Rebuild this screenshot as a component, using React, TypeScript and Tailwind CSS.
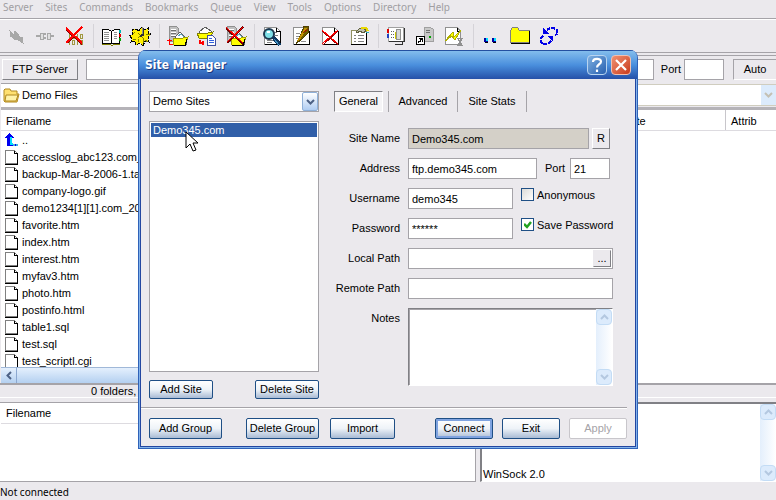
import type { ReactNode } from 'react'

const menus = ['Server', 'Sites', 'Commands', 'Bookmarks', 'Queue', 'View', 'Tools', 'Options', 'Directory', 'Help']

const files = [
  'accesslog_abc123.com_Mar-2006.gz',
  'backup-Mar-8-2006-1.tar.gz',
  'company-logo.gif',
  'demo1234[1][1].com_2006.zip',
  'favorite.htm',
  'index.htm',
  'interest.htm',
  'myfav3.htm',
  'photo.htm',
  'postinfo.html',
  'table1.sql',
  'test.sql',
  'test_scriptl.cgi',
]

function Icon({ children }: { children: ReactNode }) {
  return (
    <svg width="24" height="24" viewBox="0 0 24 24" fill="none" shapeRendering="crispEdges">
      {children}
    </svg>
  )
}

// grey server box with drive slots, used behind several toolbar icons
function Tower() {
  return (
    <>
      <path d="M4.500 2.500h7l2 2v13h-9z" fill="#c0c0c0" stroke="#909090" />
      <path d="M6 5h5M6 8h5M6 11h5" stroke="#fff" />
      <path d="M6 6h5M6 9h5M6 12h5" stroke="#707070" />
      <path d="M10 13h2" stroke="#00c000" strokeWidth="2" />
    </>
  )
}

function OpenFolder() {
  return (
    <>
      <path d="M10 13l5-5 6 6v6H10z" fill="#fff" stroke="#606060" />
      <path d="M13 12l3-2 3 3" stroke="#5aa0c0" />
      <path d="M8 14h10l5-1-3 8H9z" fill="#ffff00" stroke="#a0a000" />
      <path d="M9 21.500h11l2-6" stroke="#000" />
    </>
  )
}

function Page() {
  return (
    <>
      <path d="M4.500 3.500h12l4 4v13h-16z" fill="#fff" stroke="#909090" />
      <path d="M16.500 3.500v4h4v13h-16" stroke="#000" />
    </>
  )
}

const groups: { name: string; art: ReactNode }[][] = [
  [
    {
      name: 'Connect',
      art: (
        <path d="M6 7l4 4 1-4 6 7 1-1 1 6-6-4-2 1-3-4-1 1z" fill="#a8a8a8" stroke="#a8a8a8" />
      ),
    },
    {
      name: 'Disconnect',
      art: (
        <>
          <path d="M3 12h4M17 12h4M11 10h2M11 14h2" stroke="#a8a8a8" strokeWidth="2" />
          <path d="M7 9h3v6H7zM14 9h3v6h-3z" stroke="#a8a8a8" fill="#e0e0e0" />
        </>
      ),
    },
    {
      name: 'Abort',
      art: (
        <>
          <path d="M7.500 10v5M10.500 10.500h2v4h-2zM15.500 10v5M18.500 10.500h2v4h-2zM7.500 16v5M10.500 16.500h2v4h-2zM15.500 16v5M18.500 16.500h2v4h-2z" stroke="#a09840" />
          <path d="M4 5l16 15M20 3L5 19" stroke="#800000" strokeWidth="2" />
          <path d="M4 4l16 15M20 3L4 19" stroke="#ff0000" strokeWidth="2" />
        </>
      ),
    },
  ],
  [
    {
      name: 'Site Manager',
      art: (
        <>
          <path d="M3.500 5.500h6l3 2 3-2h5v14h-17z" fill="#fff" stroke="#000" />
          <path d="M12.500 7v13" stroke="#000" />
          <path d="M5 8.500h5M5 10.500h5M5 12.500h5M5 14.500h5M5 16.500h5M15 8.500h3M15 10.500h3M15 12.500h3M15 14.500h3" stroke="#909090" />
          <path d="M21 6v3" stroke="#00b0b0" strokeWidth="2" />
          <path d="M21 10v3" stroke="#e00000" strokeWidth="2" />
          <path d="M21 14v3" stroke="#00a000" strokeWidth="2" />
          <path d="M3 20.500h8l2 1 2-1h6" stroke="#808000" />
        </>
      ),
    },
    {
      name: 'Options',
      art: (
        <>
          <path d="M8 5l3 2 2-4 3 3 4-2v5l3 1-3 4 1 4-4-1-2 5-3-3-4 2-1-4-4 1 1-4-3-2 4-2-1-4z" fill="#ffee00" stroke="#000" strokeDasharray="3 1" />
          <path d="M7 8l-2 2M17 16l3 2M5 15h3M18 10h4M10 18v-3M15 19v-4" stroke="#808000" />
          <path d="M10 9l6 6M10 14l3-3" stroke="#808000" />
          <path d="M15 4v7l-3 1" stroke="#303030" strokeWidth="2" />
          <path d="M14 3v7" stroke="#909090" />
        </>
      ),
    },
  ],
  [
    {
      name: 'Upload',
      art: (
        <>
          <Tower />
          <OpenFolder />
          <path d="M2 16.500h5M4.500 15v5.500H8" stroke="#ff0000" />
        </>
      ),
    },
    {
      name: 'Download',
      art: (
        <>
          <path d="M5 8l6-5 6 4v6H5z" fill="#fff" stroke="#606060" />
          <path d="M3 9h11l5-1-3 6H5z" fill="#ffff00" stroke="#808000" />
          <path d="M13.500 11.500h5l3 3v7h-8z" fill="#fff" stroke="#4050a0" />
          <path d="M15 14.500h3M15 16.500h5M15 18.500h5" stroke="#3060e0" />
          <path d="M6 16v3h4M9 17v4" stroke="#ff0000" strokeWidth="2" />
        </>
      ),
    },
    {
      name: 'Delete Queue',
      art: (
        <>
          <Tower />
          <OpenFolder />
          <path d="M3 4l17 16M20 3L4 19" stroke="#700000" strokeWidth="2" />
          <path d="M3 3l17 16M20 3L4 18" stroke="#ff0000" />
        </>
      ),
    },
  ],
  [
    {
      name: 'View',
      art: (
        <>
          <Page />
          <path d="M7 16h7M7 18h5M14 8h3M15 11h3" stroke="#808080" />
          <circle cx="9" cy="10" r="5" fill="#7ee0e8" stroke="#1c3850" strokeWidth="2" shapeRendering="auto" />
          <path d="M7 8h3" stroke="#fff" strokeWidth="2" />
          <path d="M13 13l7 8" stroke="#103860" strokeWidth="4" />
          <path d="M14 15l5 6" stroke="#4090c0" />
        </>
      ),
    },
    {
      name: 'Edit',
      art: (
        <>
          <Page />
          <path d="M7 9h4M7 12h4M12 17h5M7 14h3" stroke="#909090" />
          <path d="M7 20l5-10 3-8h5l-1 7-5 5z" fill="#706000" stroke="#504000" />
          <path d="M9 17l8-13" stroke="#c09000" strokeWidth="2" />
          <path d="M14 9l5-4" stroke="#a02000" />
        </>
      ),
    },
    {
      name: 'Delete',
      art: (
        <>
          <Page />
          <path d="M4 7l16 14M20 7L5 21" stroke="#a00000" />
          <path d="M4 6l16 14M20 6L4 20" stroke="#ff0000" />
        </>
      ),
    },
    {
      name: 'Properties',
      art: (
        <>
          <path d="M4.500 6.500h15v14h-15z" fill="#fff" stroke="#909060" />
          <path d="M4 20.500h15.500V8" stroke="#000" />
          <path d="M7 11.500h2M11 11.500h6M7 14.500h2M11 14.500h6M7 17.500h2M11 17.500h6" stroke="#808080" />
          <path d="M9 8l4-4 4 0 2 3-3 2-3-2-3 2z" fill="#c0c0b0" stroke="#606040" />
          <path d="M14 4h5l2 3" stroke="#e8d800" strokeWidth="2" />
          <path d="M19 8.500h3" stroke="#30b0c0" />
        </>
      ),
    },
  ],
  [
    {
      name: 'Bookmarks',
      art: (
        <>
          <path d="M4.500 3.500h15v14h-15z" fill="#fff" stroke="#a0a0a0" />
          <path d="M20.500 4v13.500H5M11 20.500h7.500V18" stroke="#303030" />
          <path d="M12.500 5.500h4v10h-4z" fill="#d8d8d8" stroke="#909090" />
          <path d="M7 7.500h3M7 10.500h3M7 13.500h3" stroke="#606060" strokeDasharray="1 1" />
          <path d="M4 5v4" stroke="#e00000" strokeWidth="2" />
          <path d="M4 10v4" stroke="#2040c0" strokeWidth="2" />
          <path d="M11.500 8v7" stroke="#d0c800" />
        </>
      ),
    },
    {
      name: 'Shortcut',
      art: (
        <>
          <path d="M11.500 3.500h6l3 2v12h-9z" fill="#c8c8c8" stroke="#a0a0a0" />
          <path d="M13 6.500h4M13 8.500h4" stroke="#707070" />
          <path d="M16 13h2" stroke="#00a000" strokeWidth="2" />
          <path d="M3.500 12.500h8v8h-8z" fill="#fff" stroke="#000" />
          <path d="M5.500 19v-2h2v-2h2M6 14.500h3.500V18" stroke="#000" />
        </>
      ),
    },
    {
      name: 'Script',
      art: (
        <>
          <path d="M3.500 3.500h12l3 4v13h-15z" fill="#fff" stroke="#909090" />
          <path d="M15.500 3.500v4h3" stroke="#000" />
          <path d="M3 17l8-9 1 5 7-7-6 10-3-4z" fill="#ffff00" stroke="#b0b000" />
          <path d="M15 14.500h6M15 21.500h6M16 15l4 6M20 15l-4 6" stroke="#909090" />
        </>
      ),
    },
  ],
  [
    {
      name: 'Parent',
      art: (
        <>
          <path d="M5 14h4v4H5zM13 14h4v4h-4z" fill="#0000a0" />
          <path d="M7 14h2v3H7zM15 14h2v3h-2z" fill="#00e0ff" />
          <path d="M6 18.500h3M14 18.500h3" stroke="#000" />
        </>
      ),
    },
    {
      name: 'New Folder',
      art: (
        <>
          <path d="M2.500 6.500l2-3h5l2 3h10v12h-19z" fill="#ffff00" stroke="#808080" />
          <path d="M3 19.500h18.500V7" stroke="#000" />
        </>
      ),
    },
    {
      name: 'Refresh',
      art: (
        <>
          <path d="M10 6l3-2h4l3 2v4l-2 1M6 12l-2 2v4l2 2h5l4-4" stroke="#0000e8" strokeWidth="2" strokeDasharray="4 1" />
          <path d="M6 4v6h6zM16 18v-6h-6z" fill="#0000e8" />
        </>
      ),
    },
  ],
]

function Chevron({ up, muted }: { up?: boolean; muted?: boolean }) {
  return (
    <svg width="9" height="6" viewBox="0 0 9 6" fill="none">
      <path d={up ? 'M1 5l3.500-3.500L8 5' : 'M1 1l3.500 3.500L8 1'} stroke={muted ? '#b4c8e0' : '#4d6185'} strokeWidth="2" />
    </svg>
  )
}

function ScrollBar() {
  const btn = 'flex h-4 items-center justify-center rounded-sm border border-[#c3dcf5] bg-[#dcebfc]'
  return (
    <div className="flex w-4 shrink-0 flex-col justify-between bg-linear-to-r from-[#e4effc] to-white">
      <button type="button" aria-label="Scroll up" className={btn}><Chevron up muted /></button>
      <button type="button" aria-label="Scroll down" className={btn}><Chevron muted /></button>
    </div>
  )
}

function XpButton({ children, className = '' }: { children: ReactNode; className?: string }) {
  return (
    <button className={`rounded-xs border border-[#1f4f85] bg-linear-to-b from-white via-[#eef3f8] via-50% to-[#a9bbd4] text-center whitespace-nowrap ${className}`}>
      {children}
    </button>
  )
}

const field = 'h-[21px] min-w-0 border border-[#a5a3a8] bg-white px-[3px] outline-none'
const label = 'w-[66px] shrink-0 text-right whitespace-nowrap'

function SiteManager() {
  return (
    <section className="absolute top-[50px] left-[138px] w-[500px] overflow-hidden rounded-t-lg border-x border-b border-[#2f62b8] bg-[#ebe9ed] px-0.5 pb-0.5 shadow-[inset_0_0_0_1px_#83b3ea,inset_0_0_0_2px_#2346a0]">
      <header className="-mx-0.5 flex h-[29px] items-center gap-1 border-t border-[#2450a0] bg-linear-to-b from-[#83bdec] via-[#4a8fdd] via-50% to-[#2650a8] px-1.5">
        <h1 className="flex-1 font-['DejaVu_Sans_Condensed','DejaVu_Sans',sans-serif] text-xs font-bold text-white [text-shadow:1px_1px_0_#1c3a80]">
          Site Manager
        </h1>
        <button aria-label="Help" className="flex size-5 items-center justify-center rounded-sm border border-[#b8d4f0] bg-linear-to-br from-[#7fb0e0] to-[#2860b0]">
          <svg width="12" height="16" viewBox="0 0 12 16" fill="none">
            <path d="M2 5c0-4 8-4 8-0.500 0 3-4 2.500-4 6M6 12.500v2.500" stroke="#fff" strokeWidth="2.200" />
          </svg>
        </button>
        <button aria-label="Close" className="flex size-5 items-center justify-center rounded-sm border border-[#f0c0b0] bg-linear-to-br from-[#f09070] to-[#c83818]">
          <svg width="12" height="12" viewBox="0 0 12 12">
            <path d="M1 1l10 10M11 1L1 11" stroke="#fff" strokeWidth="2.200" />
          </svg>
        </button>
      </header>

      <div className="flex gap-[15px] pt-3 pr-[22px] pl-2">
        <div className="w-[170px] shrink-0">
          <div className="relative">
            <select aria-label="Group" className="h-[21px] w-full appearance-none border border-[#a5a3a8] bg-white px-[3px] outline-none">
              <option>Demo Sites</option>
            </select>
            <span className="pointer-events-none absolute top-px right-px flex h-[19px] w-4 items-center justify-center rounded-xs border border-[#8fb0d8] bg-linear-to-b from-white to-[#b0cdf2]">
              <Chevron />
            </span>
          </div>
          <ul className="relative mt-[9px] h-[251px] border border-[#a5a3a8] bg-white p-px">
            <li className="h-[14px] bg-[#315fa8] pl-0.5 leading-[15px] text-white">Demo345.com</li>
            <svg className="absolute top-[9px] left-[35px]" width="14" height="22" viewBox="0 0 14 22">
              <path d="M1 1v16l4-4 3 7 3-1-3-7h5z" fill="#fff" stroke="#000" />
            </svg>
          </ul>
          <div className="mt-2 flex justify-between">
            <XpButton className="h-[19px] w-16">Add Site</XpButton>
            <XpButton className="h-[19px] w-16">Delete Site</XpButton>
          </div>
        </div>

        <form className="min-w-0 flex-1">
          <nav className="mb-4 flex h-[21px] items-center">
            <button type="button" className="h-full w-[49px] border border-t-[#808085] border-r-white border-b-white border-l-[#808085] bg-[#f5f4f6]">General</button>
            <button type="button" className="ml-[5px] h-full w-[70px] border-x border-[#a5a3a8]">Advanced</button>
            <button type="button" className="h-full w-[69px] border-r border-[#a5a3a8]">Site Stats</button>
          </nav>
          <div className="flex flex-col gap-[9px]">
            <div className="flex items-center gap-2 pr-[3px]">
              <label htmlFor="site" className={label}>Site Name</label>
              <div className="flex flex-1 gap-[3px]">
                <input id="site" readOnly defaultValue="Demo345.com" className="h-[21px] w-0 flex-1 border border-[#a5a3a8] bg-[#d4d0c8] px-[3px] outline-none" />
                <button type="button" className="w-[18px] border border-t-white border-r-[#808085] border-b-[#808085] border-l-white bg-[#ebe9ed]">R</button>
              </div>
            </div>
            <div className="flex items-center gap-2 pr-[3px]">
              <label htmlFor="address" className={label}>Address</label>
              <input id="address" defaultValue="ftp.demo345.com" className={`${field} w-[129px]`} />
              <div className="flex flex-1 items-center justify-between">
                <label htmlFor="port">Port</label>
                <input id="port" defaultValue="21" className={`${field} w-10`} />
              </div>
            </div>
            <div className="flex items-center gap-2">
              <label htmlFor="user" className={label}>Username</label>
              <input id="user" defaultValue="demo345" className={`${field} w-[105px] shrink-0`} />
              <label className="flex h-[21px] items-start gap-[3px] leading-[14px] whitespace-nowrap">
                <input type="checkbox" className="size-[13px] appearance-none border border-[#1f4f85] bg-linear-to-br from-[#dcdcd8] to-white" />
                Anonymous
              </label>
            </div>
            <div className="flex items-center gap-2">
              <label htmlFor="pass" className={label}>Password</label>
              <input id="pass" defaultValue="******" className={`${field} w-[105px] shrink-0`} />
              <label className="relative flex h-[21px] items-start gap-[3px] leading-[14px] whitespace-nowrap">
                <input type="checkbox" defaultChecked className="size-[13px] appearance-none border border-[#1f4f85] bg-white" />
                <svg className="pointer-events-none absolute top-[3px] left-[3px]" width="8" height="8" viewBox="0 0 8 8" fill="none">
                  <path d="M0 3l3 3 4-5" stroke="#21a121" strokeWidth="2.500" />
                </svg>
                Save Password
              </label>
            </div>
            <div className="flex items-center gap-2">
              <label htmlFor="local" className={label}>Local Path</label>
              <div className="flex h-[21px] flex-1 border border-[#a5a3a8] bg-white p-px">
                <input id="local" className="w-0 flex-1 outline-none" />
                <button type="button" className="w-[18px] border border-t-[#ebe9ed] border-r-[#808085] border-b-[#808085] border-l-[#ebe9ed] bg-[#ebe9ed]">...</button>
              </div>
            </div>
            <div className="flex items-center gap-2">
              <label htmlFor="remote" className={label}>Remote Path</label>
              <input id="remote" className={`${field} flex-1`} />
            </div>
            <div className="flex gap-2">
              <label htmlFor="notes" className={`${label} leading-[21px]`}>Notes</label>
              <div className="flex h-[78px] flex-1 border border-t-[#808085] border-r-white border-b-white border-l-[#808085] bg-white shadow-[inset_1px_1px_0_#a5a3a8]">
                <textarea id="notes" className="w-0 flex-1 resize-none outline-none" />
                <ScrollBar />
              </div>
            </div>
          </div>
        </form>
      </div>

      <footer className="mt-2 mr-2 flex border-t border-[#a5a3a8] pt-2.5 pb-[7px] pl-2 shadow-[inset_0_1px_0_#fff]">
        <div className="flex w-[170px] justify-between">
          <XpButton className="h-[21px] w-[73px]">Add Group</XpButton>
          <XpButton className="h-[21px] w-[73px]">Delete Group</XpButton>
        </div>
        <XpButton className="ml-[11px] h-[21px] w-[65px]">Import</XpButton>
        <div className="ml-auto flex gap-[9px]">
          <XpButton className="h-[21px] w-[58px] ring-2 ring-[#7fa3e0] ring-inset">Connect</XpButton>
          <XpButton className="h-[21px] w-[58px]">Exit</XpButton>
          <button disabled className="h-[21px] w-[58px] rounded-xs border border-[#c8c6cb] bg-white text-[#a5a3a8]">Apply</button>
        </div>
      </footer>
    </section>
  )
}

export default function App() {
  return (
    <div className="relative flex h-screen flex-col overflow-hidden bg-[#ebe9ed] font-['Liberation_Sans',Arial,sans-serif] text-[11px] leading-[13px] text-black">
      <nav className="flex h-[18px] shrink-0 gap-3 pl-[3px] font-['Noto_Sans',sans-serif] text-[10px] leading-[14px] text-[#a09ea2]">
        {menus.map((m) => (
          <button key={m} className="h-[14px]">{m}</button>
        ))}
      </nav>

      <div className="flex h-[35px] shrink-0 items-center border-y border-[#a5a3a8] pl-px shadow-[inset_0_1px_0_#fff]">
        {groups.map((group, i) => (
          <div key={i} className="flex">
            {i > 0 && <span className="mr-0.5 ml-[5px] w-px bg-[#d5d3d8]" />}
            {group.map((tool) => (
              <button key={tool.name} aria-label={tool.name} className="flex w-[29px] justify-center">
                <Icon>{tool.art}</Icon>
              </button>
            ))}
          </div>
        ))}
      </div>

      <div className="mt-0.5 flex h-7 shrink-0 items-center border-t border-[#a5a3a8] pl-0.5">
        <button className="h-[21px] w-[76px] border border-t-white border-r-[#808085] border-b-[#808085] border-l-white">FTP Server</button>
        <input aria-label="FTP Server" className="ml-2 h-[21px] min-w-0 flex-1 border border-[#a5a3a8] bg-white" />
        <label htmlFor="main-port" className="mr-[3px] ml-[7px]">Port</label>
        <input id="main-port" className="h-[21px] w-10 border border-[#a5a3a8] bg-white" />
        <button className="ml-[9px] h-[21px] w-[43px] border-t border-b border-l border-t-[#a5a3a8] border-b-white border-l-[#a5a3a8]">Auto</button>
      </div>

      <div className="grid h-[302px] shrink-0 grid-cols-[476fr_300fr] grid-rows-1 border-b-2 border-[#a5a3a8] pl-px">
        <div className="flex min-h-0 min-w-0 flex-col bg-white">
          <div className="flex h-6 shrink-0 items-center gap-0.5 border-t border-[#a5a3a8] pl-0.5">
            <svg width="17" height="15" viewBox="0 0 17 15">
              <path d="M1 13V2l1-1h5l1 2h6v3h2l-2 8H2z" fill="#ffe070" stroke="#b08820" />
              <path d="M3 7h12l-2 6H2z" fill="#fff2a8" stroke="#b08820" />
            </svg>
            Demo Files
          </div>
          <div className="h-6 shrink-0 border-t-3 border-b border-t-[#b5b3b8] border-b-[#dddbe0] pl-[5px] leading-[22px]">Filename</div>
          <ul className="min-h-0 flex-1 overflow-hidden pt-px">
            <li className="flex h-[17px] items-center gap-[3px] pl-[3px]">
              <svg width="15" height="15" viewBox="0 0 15 15" fill="none" shapeRendering="crispEdges">
                <path d="M5 0l5 5H8v6h6v2H3V5H0z" fill="#0000f0" />
                <path d="M7 4v7h2" stroke="#00e0ff" strokeWidth="2" />
                <path d="M9 12h6" stroke="#40b0e0" strokeWidth="2" strokeDasharray="2 1" />
              </svg>
              ..
            </li>
            {files.map((f) => (
              <li key={f} className="flex h-[17px] items-center gap-1 pl-1 whitespace-nowrap">
                <svg width="13" height="17" viewBox="0 0 13 17" fill="none" shapeRendering="crispEdges" className="shrink-0">
                  <path d="M0.500 1.500h9l3 3v10h-12z" fill="#fff" stroke="#808080" />
                  <path d="M9.500 1.500v3h3M12.500 5v10.500H0" stroke="#000" />
                </svg>
                {f}
              </li>
            ))}
          </ul>
          <div className="flex h-4 shrink-0 bg-linear-to-b from-[#e8f2fe] to-[#b4d0f0] shadow-[inset_0_1px_0_#a0b8d8]">
            <button aria-label="Scroll left" className="flex w-4 items-center justify-center border-r border-[#8ca8d0]">
              <svg width="6" height="9" viewBox="0 0 6 9" fill="none">
                <path d="M5 1L1.500 4.500 5 8" stroke="#4d6185" strokeWidth="2" />
              </svg>
            </button>
          </div>
        </div>

        <div className="flex min-w-0 flex-col bg-white">
          <div className="relative h-6 shrink-0 bg-[#ebe9ed] pt-px">
            <select aria-label="Remote folder" className="h-[22px] w-full appearance-none border border-[#d0cdbf] bg-white">
              <option></option>
            </select>
            <span className="pointer-events-none absolute top-0.5 right-0 flex h-5 w-[15px] items-center justify-center bg-[#dcebfc]">
              <svg width="9" height="6" viewBox="0 0 9 6" fill="none">
                <path d="M1 1l3.500 3.500L8 1" stroke="#c4c0b4" strokeWidth="2" />
              </svg>
            </span>
          </div>
          <div className="flex h-6 shrink-0 border-t-3 border-b border-t-[#b5b3b8] border-b-[#dddbe0] leading-[22px]">
            <span className="flex-1 pl-[146px]">Date</span>
            <span className="w-[51px] border-l border-[#c8c6cb] pl-[5px]">Attrib</span>
          </div>
        </div>
      </div>

      <div className="h-[13px] shrink-0 border-b border-white pl-[91px]">0 folders,</div>

      <div className="mt-1 grid min-h-0 flex-1 grid-cols-[476fr_296fr] gap-1">
        <div className="border-y border-r border-[#a5a3a8] bg-white">
          <div className="ml-px h-[21px] border-b border-[#dddbe0] pl-[5px] leading-[21px]">Filename</div>
        </div>
        <div className="flex min-h-0 border-t-2 border-b border-l-2 border-t-[#808085] border-b-white border-l-[#808085] bg-white">
          <p className="flex flex-1 items-end pl-px">WinSock 2.0</p>
          <ScrollBar />
        </div>
      </div>

      <footer className="h-[18px] shrink-0 pt-px font-['Noto_Sans',sans-serif] text-[10px] leading-[18px]">Not connected</footer>

      <SiteManager />
    </div>
  )
}
